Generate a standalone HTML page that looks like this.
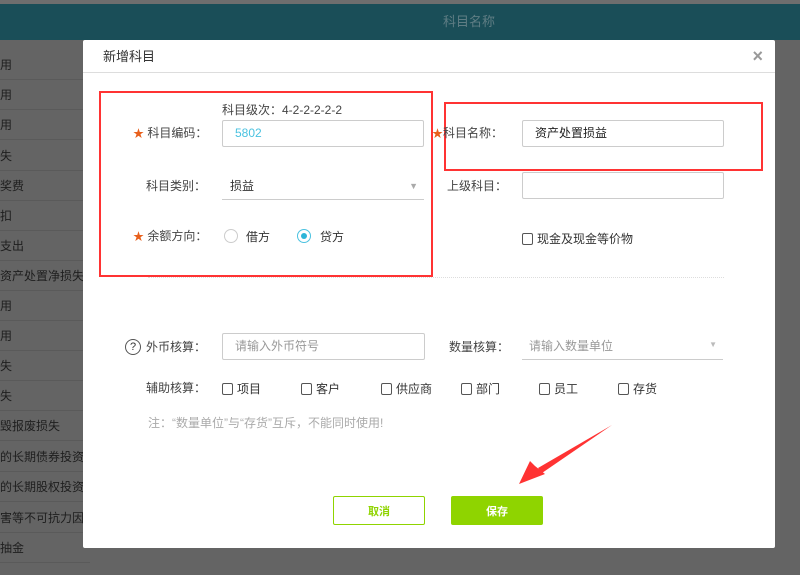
<!DOCTYPE html>
<html><head><meta charset="utf-8"><style>
*{margin:0;padding:0;box-sizing:border-box}
html,body{background:#646464}
body{width:800px;height:575px;overflow:hidden;position:relative;font-family:"Liberation Sans","Noto Sans CJK SC",sans-serif;font-size:12px;color:#333}
.abs{position:absolute}
.top{left:0;top:0;width:800px;height:4px;background:#6e6e6e}
.hdr{left:0;top:4px;width:800px;height:36px;background:#1a4e58;color:#5f7d84;font-size:13px;line-height:36px}
.row{left:0;width:90px;height:30px;border-bottom:1px solid #5a5a5a;color:#1e1e1e;font-size:12px;line-height:30px;white-space:nowrap;overflow:hidden}
.modal{left:83px;top:40px;width:692px;height:508px;background:#fff;border-radius:2px}
.ttl{left:0;top:0;width:692px;height:33px;border-bottom:1px solid #ddd;font-size:13px;line-height:33px;padding-left:20px;color:#333}
.x{right:12px;top:6px;font-size:18px;color:#999;font-weight:bold}
.lbl{font-size:12px;color:#444;text-align:right;white-space:nowrap;line-height:14px}
.star{color:#e8601c;font-size:11px}
.inp{border:1px solid #ccc;border-radius:2px;background:#fff;height:27px;line-height:25px;padding-left:12px}
.red{border:2px solid #f33}
.cb{display:inline-block;width:11px;height:12px;border:1px solid #555;border-radius:2px;vertical-align:-2px;margin-right:4px}
.rad{width:14px;height:14px;border-radius:50%;border:1px solid #ccc}
.btn{height:29px;display:flex;align-items:center;justify-content:center;border-radius:2px;font-size:11px;font-weight:bold}
</style></head><body>
<div class="abs top"></div>
<div class="abs hdr"><span class="abs" style="left:443px">科目名称</span></div>
<div class="abs row" style="top:50px">用</div>
<div class="abs row" style="top:80px">用</div>
<div class="abs row" style="top:110px">用</div>
<div class="abs row" style="top:141px">失</div>
<div class="abs row" style="top:171px">奖费</div>
<div class="abs row" style="top:201px">扣</div>
<div class="abs row" style="top:231px">支出</div>
<div class="abs row" style="top:261px">资产处置净损失</div>
<div class="abs row" style="top:291px">用</div>
<div class="abs row" style="top:321px">用</div>
<div class="abs row" style="top:351px">失</div>
<div class="abs row" style="top:381px">失</div>
<div class="abs row" style="top:411px">毁报废损失</div>
<div class="abs row" style="top:442px">的长期债券投资损</div>
<div class="abs row" style="top:472px">的长期股权投资损</div>
<div class="abs row" style="top:503px">害等不可抗力因素</div>
<div class="abs row" style="top:533px">抽金</div>

<div class="abs modal">
 <div class="abs ttl">新增科目</div>
 <div class="abs x">×</div>
 <div class="abs red" style="left:16px;top:51px;width:334px;height:186px"></div>
 <div class="abs red" style="left:361px;top:62px;width:319px;height:69px"></div>
 <div class="abs" style="left:139px;top:61px;color:#444">科目级次：4-2-2-2-2-2</div>
 <div class="abs lbl" style="left:50px;top:86px"><span class="star">★</span> 科目编码：</div>
 <div class="abs inp" style="left:139px;top:80px;width:202px;color:#4ac2e0">5802</div>
 <div class="abs lbl" style="left:63px;top:139px">科目类别：</div>
 <div class="abs" style="left:139px;top:133px;width:202px;height:27px;border-bottom:1px solid #ccc;line-height:26px;padding-left:8px">损益<span class="abs" style="right:6px;top:0;color:#aaa;font-size:9px">▼</span></div>
 <div class="abs lbl" style="left:50px;top:189px"><span class="star">★</span> 余额方向：</div>
 <div class="abs rad" style="left:141px;top:189px"></div>
 <div class="abs" style="left:163px;top:188px">借方</div>
 <div class="abs rad" style="left:214px;top:189px;border-color:#4ac2e0"><div class="abs" style="left:3px;top:3px;width:6px;height:6px;border-radius:50%;background:#2cb5d8"></div></div>
 <div class="abs" style="left:237px;top:188px">贷方</div>

 <div class="abs lbl" style="left:349px;top:86px"><span class="star">★</span>科目名称：</div>
 <div class="abs inp" style="left:439px;top:80px;width:202px;color:#222">资产处置损益</div>
 <div class="abs lbl" style="left:364px;top:139px">上级科目：</div>
 <div class="abs inp" style="left:439px;top:132px;width:202px"></div>
 <div class="abs" style="left:439px;top:190px"><span class="cb"></span>现金及现金等价物</div>
 <div class="abs" style="left:65px;top:237px;width:576px;border-top:1px dotted #ddd"></div>

 <div class="abs" style="left:42px;top:299px;width:16px;height:16px;border:1px solid #555;border-radius:50%;text-align:center;line-height:14px;font-size:11px">?</div>
 <div class="abs lbl" style="left:63px;top:300px">外币核算：</div>
 <div class="abs inp" style="left:139px;top:293px;width:203px;color:#999">请输入外币符号</div>
 <div class="abs lbl" style="left:366px;top:300px">数量核算：</div>
 <div class="abs" style="left:439px;top:293px;width:201px;height:27px;border-bottom:1px solid #ccc;line-height:27px;padding-left:7px;color:#999">请输入数量单位<span class="abs" style="right:6px;top:-2px;color:#bbb;font-size:8px">▼</span></div>
 <div class="abs lbl" style="left:63px;top:341px">辅助核算：</div>
 <div class="abs" style="left:139px;top:340px"><span class="cb"></span>项目</div>
 <div class="abs" style="left:218px;top:340px"><span class="cb"></span>客户</div>
 <div class="abs" style="left:298px;top:340px"><span class="cb"></span>供应商</div>
 <div class="abs" style="left:378px;top:340px"><span class="cb"></span>部门</div>
 <div class="abs" style="left:456px;top:340px"><span class="cb"></span>员工</div>
 <div class="abs" style="left:535px;top:340px"><span class="cb"></span>存货</div>
 <div class="abs" style="left:65px;top:374px;color:#aaa">注：“数量单位”与“存货”互斥，不能同时使用!</div>

 <div class="abs btn" style="left:250px;top:456px;width:92px;border:1px solid #8fd400;color:#8fd400;background:#fff">取消</div>
 <div class="abs btn" style="left:368px;top:456px;width:92px;background:#8fd400;color:#fff">保存</div>
</div>
<svg class="abs" style="left:0;top:0" width="800" height="575">
 <path d="M612 425 L538 468 L542 473 Z" fill="#f33"/>
 <path d="M519 484 L530 461 L535 466 L545 474 Z" fill="#f33"/>
</svg>
</body></html>
